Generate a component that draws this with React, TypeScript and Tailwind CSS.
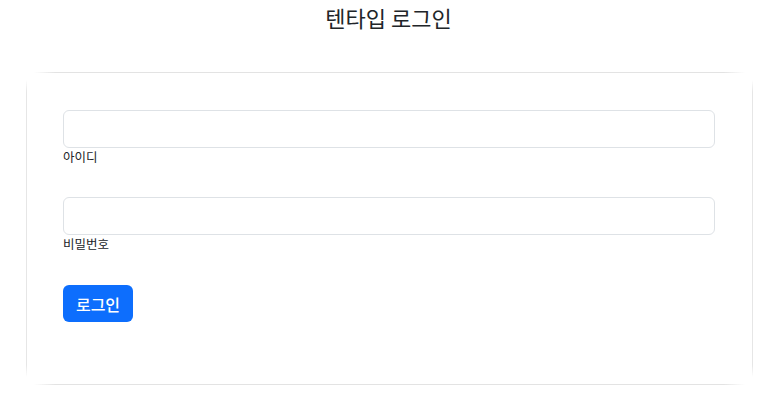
import React, { useState } from "react";

const font = { fontFamily: '"Noto Sans CJK KR", "Noto Sans", sans-serif' };

const Field = ({
  label,
  type,
  value,
  onChange,
}: {
  label: string;
  type: string;
  value: string;
  onChange: (v: string) => void;
}) => {
  return (
    <div className="flex flex-col">
      <input
        type={type}
        value={value}
        onChange={(e) => onChange(e.target.value)}
        className="h-[38px] w-full rounded-[6px] border border-[#dee2e6] bg-white px-3 text-[16px] text-[#212529] outline-none"
      />
      <label className="text-[12.5px] leading-[18px] text-[#212529]">{label}</label>
    </div>
  );
};

export default function App() {
  const [inputs, setInputs] = useState({ id: "", password: "" });

  return (
    <div className="min-h-[406px] w-full bg-white" style={font}>
      {/* title */}
      <h1 className="pl-[4px] pt-[3px] text-center text-[22px] font-normal leading-[28px] text-[#212529]">
        텐타입 로그인
      </h1>

      {/* card */}
      <div className="mx-[26px] mt-[41px] flex w-[727px] flex-col">
        <div className="mx-[8px] h-px [background-image:linear-gradient(to_right,transparent,#e3e3e3_3%,#e3e3e3_97%,transparent)]" />
        <div className="flex">
          <div className="my-[7px] w-px [background-image:linear-gradient(to_bottom,transparent,#e6e6e6_4%,#e6e6e6_96%,transparent)]" />
          <div className="flex flex-1 flex-col pb-[62px] pl-[36px] pr-[37px] pt-[37px]">
            <Field
              label="아이디"
              type="text"
              value={inputs.id}
              onChange={(v) => setInputs((prev) => ({ ...prev, id: v }))}
            />
            <div className="mt-[31px]">
              <Field
                label="비밀번호"
                type="password"
                value={inputs.password}
                onChange={(v) => setInputs((prev) => ({ ...prev, password: v }))}
              />
            </div>
            <button className="mt-[32px] h-[37px] w-[70px] rounded-[6px] bg-[#0d6efd] text-[16px] font-medium text-white">
              로그인
            </button>
          </div>
          <div className="my-[7px] w-px [background-image:linear-gradient(to_bottom,transparent,#e6e6e6_4%,#e6e6e6_96%,transparent)]" />
        </div>
        <div className="mx-[8px] h-px [background-image:linear-gradient(to_right,transparent,#e3e3e3_3%,#e3e3e3_97%,transparent)]" />
      </div>
    </div>
  );
}
